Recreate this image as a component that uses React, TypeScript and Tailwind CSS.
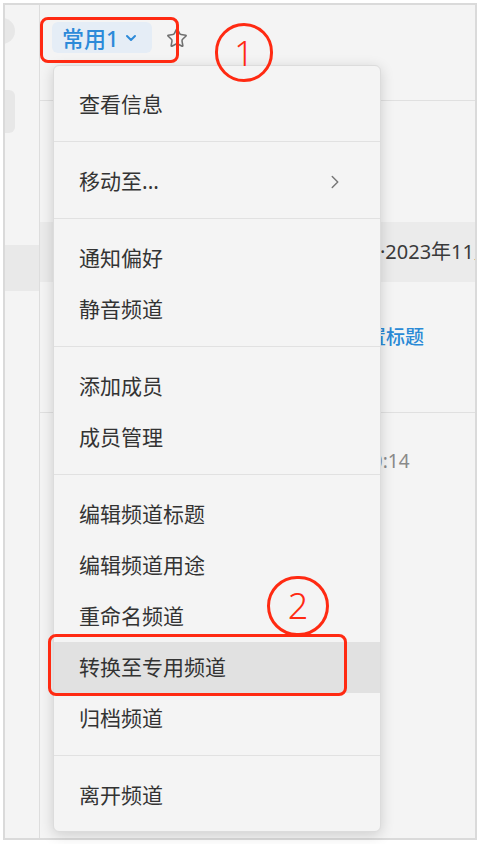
import { ChevronDown, ChevronRight, Star } from 'lucide-react';

const sections: string[][] = [
  ['查看信息'],
  ['移动至...'],
  ['通知偏好', '静音频道'],
  ['添加成员', '成员管理'],
  ['编辑频道标题', '编辑频道用途', '重命名频道', '转换至专用频道', '归档频道'],
  ['离开频道'],
];

const font = "font-['Noto_Sans','Noto_Sans_CJK_SC',sans-serif]";

export default function App() {
  return (
    <div className={`relative w-[480px] h-[844px] bg-white overflow-hidden ${font}`}>
      {/* Window frame */}
      <div className="ml-[3px] mt-[3px] w-[474px] h-[837px] border-2 border-[#dadada] bg-[#f4f4f4] flex overflow-hidden">
        {/* Sidebar */}
        <div className="w-[35px] shrink-0 border-r border-[#dddddd] flex flex-col overflow-hidden">
          <div className="-ml-[16px] mt-[13px] w-[26px] h-[26px] rounded-full bg-[#e7e7e7]" />
          <div className="mt-[46px] w-[10px] h-[43px] rounded-r-md bg-[#e7e7e7]" />
          <div className="mt-[112px] h-[46px] bg-[#e9e9e9]" />
        </div>

        {/* Main area */}
        <div className="flex-1 flex flex-col overflow-hidden">
          <div className="h-[96px] shrink-0 border-b border-[#e0e0e0] flex items-start pl-[12px] pt-[17px]">
            <div className="h-[31px] w-[100px] rounded-md bg-[#e5edf6] flex items-center pl-[10px] gap-[4px] text-[22px] font-medium text-[#2d8ad9] leading-none">
              <span>常用1</span>
              <ChevronDown className="w-[16px] h-[16px]" strokeWidth={3} />
            </div>
            <Star className="ml-[14px] mt-[5px] w-[22px] h-[22px] text-[#6f6f6f]" strokeWidth={1.7} />
          </div>

          <div className="h-[121px] shrink-0" />
          <div className="h-[60px] shrink-0 bg-[#ebebeb] flex items-center pl-[340px] whitespace-nowrap text-[20px] text-[#3a3a3a]">
            ·2023年11月
          </div>
          <div className="h-[130px] shrink-0 flex items-center pl-[308px] pb-[20px] whitespace-nowrap text-[19px] font-medium text-[#2a8ad6]">
            设置标题
          </div>
          <div className="border-t border-[#e0e0e0] h-[100px] shrink-0 flex items-center pl-[321px] pb-[2px] whitespace-nowrap text-[19px] text-[#8a8a8a]">
            10:14
          </div>
        </div>
      </div>

      {/* Channel menu */}
      <div className="absolute left-[53px] top-[65px] w-[328px] rounded-md border border-[#dcdcdc] bg-[#f4f4f4] shadow-[0_3px_14px_rgba(0,0,0,0.16)] text-[21px] text-[#333333]">
        {sections.map((items, si) => (
          <div
            key={si}
            className={`${si === 0 ? 'pt-[13px]' : 'pt-[14px]'} ${si === sections.length - 1 ? 'pb-[10px]' : 'pb-[11px] border-b border-[#e1e1e1]'}`}
          >
            {items.map((label) => (
              <div
                key={label}
                className={`h-[51px] flex items-center justify-between pl-[25px] pr-[34px] leading-none ${label === '转换至专用频道' ? 'bg-[#e1e1e1]' : ''}`}
              >
                <span>{label}</span>
                {label === '移动至...' && <ChevronRight className="w-[22px] h-[22px] text-[#777777]" strokeWidth={1.6} />}
              </div>
            ))}
          </div>
        ))}
      </div>

      {/* Annotations */}
      <div className="absolute left-[40px] top-[17px] w-[139px] h-[46px] rounded-lg border-[3px] border-[#ff2a12]" />
      <div className="absolute left-[215px] top-[23px] w-[58px] h-[59px] rounded-full border-[3px] border-[#ff2a12] flex items-center justify-center text-[34px] font-light text-[#ff2a12] leading-none">
        1
      </div>
      <div className="absolute left-[48px] top-[634px] w-[299px] h-[62px] rounded-lg border-[3px] border-[#ff2a12]" />
      <div className="absolute left-[267px] top-[576px] w-[62px] h-[60px] rounded-full border-[3px] border-[#ff2a12] bg-[#f4f4f4] flex items-center justify-center text-[36px] font-light text-[#ff2a12] leading-none">
        2
      </div>
    </div>
  );
}
